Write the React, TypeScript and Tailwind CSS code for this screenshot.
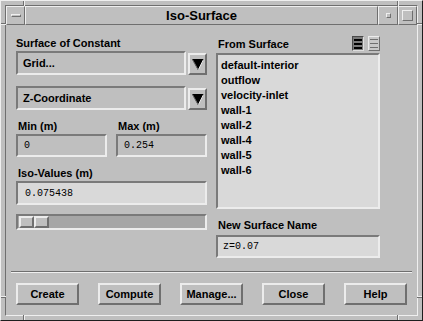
import React from "react";

const raised =
  "border-t-[2px] border-l-[2px] border-b-[2px] border-r-[2px] border-t-[#ececec] border-l-[#ececec] border-b-[#6f6f6f] border-r-[#6f6f6f]";
const sunken =
  "border-t-[2px] border-l-[2px] border-b-[2px] border-r-[2px] border-t-[#7a7a7a] border-l-[#7a7a7a] border-b-[#ececec] border-r-[#ececec]";

function DropArrow() {
  return (
    <div className={`w-[19px] h-[22px] mt-[2px] bg-[#bfbfbf] flex items-center justify-center ${raised}`}>
      <svg width="12" height="11" viewBox="0 0 12 11">
        <polygon points="0,0 12,0 6,11" fill="#000" />
        <line x1="0.5" y1="0.5" x2="6" y2="10.5" stroke="#6f6f6f" strokeWidth="1" />
        <line x1="11.5" y1="0.5" x2="6.5" y2="10.5" stroke="#e6e6e6" strokeWidth="1" />
      </svg>
    </div>
  );
}

function SelectAllIcon() {
  return (
    <div className="w-[12px] h-[15px] bg-[#7a7a7a] border border-t-[#4a4a4a] border-l-[#4a4a4a] border-b-[#dedede] border-r-[#dedede] flex flex-col justify-center gap-[2px] px-[1px]">
      <div className="h-[2px] bg-black" />
      <div className="h-[2px] bg-black" />
      <div className="h-[2px] bg-black" />
    </div>
  );
}

function DeselectIcon() {
  return (
    <div className="w-[12px] h-[15px] bg-[#c8c8c8] border border-t-[#ececec] border-l-[#ececec] border-b-[#6f6f6f] border-r-[#6f6f6f] flex flex-col justify-center gap-[3px] px-[1px]">
      <div className="h-[1px] bg-[#6f6f6f]" />
      <div className="h-[1px] bg-[#6f6f6f]" />
      <div className="h-[1px] bg-[#6f6f6f]" />
    </div>
  );
}

const items = [
  "default-interior",
  "outflow",
  "velocity-inlet",
  "wall-1",
  "wall-2",
  "wall-4",
  "wall-5",
  "wall-6",
];

export default function App() {
  const label = "text-[11px] font-bold text-black leading-[14px] font-['Liberation_Sans',Arial,sans-serif]";
  const mono = "text-[10px] text-black font-['Liberation_Mono','DejaVu_Sans_Mono',monospace]";
  return (
    <div className="w-[423px] h-[321px] relative bg-[#bfbfbf] border border-t-[#efefef] border-l-[#efefef] border-r-[#1e1e1e] border-b-[#1e1e1e] p-[4px] font-['Liberation_Sans',Arial,sans-serif]">
      {/* frame corner marks */}
      <div className="absolute left-[22px] top-0 w-[1px] h-[5px] bg-[#6f6f6f]" />
      <div className="absolute left-[23px] top-0 w-[1px] h-[5px] bg-[#efefef]" />
      <div className="absolute left-[396px] top-0 w-[1px] h-[5px] bg-[#6f6f6f]" />
      <div className="absolute left-[397px] top-0 w-[1px] h-[5px] bg-[#efefef]" />
      <div className="absolute left-[22px] bottom-0 w-[1px] h-[5px] bg-[#6f6f6f]" />
      <div className="absolute left-[23px] bottom-0 w-[1px] h-[5px] bg-[#efefef]" />
      <div className="absolute left-[396px] bottom-0 w-[1px] h-[5px] bg-[#6f6f6f]" />
      <div className="absolute left-[397px] bottom-0 w-[1px] h-[5px] bg-[#efefef]" />
      <div className="absolute left-0 top-[22px] w-[5px] h-[1px] bg-[#6f6f6f]" />
      <div className="absolute left-0 top-[23px] w-[5px] h-[1px] bg-[#efefef]" />
      <div className="absolute right-0 top-[22px] w-[5px] h-[1px] bg-[#6f6f6f]" />
      <div className="absolute right-0 top-[23px] w-[5px] h-[1px] bg-[#efefef]" />
      <div className="absolute left-0 bottom-[22px] w-[5px] h-[1px] bg-[#6f6f6f]" />
      <div className="absolute left-0 bottom-[23px] w-[5px] h-[1px] bg-[#efefef]" />
      <div className="absolute right-0 bottom-[22px] w-[5px] h-[1px] bg-[#6f6f6f]" />
      <div className="absolute right-0 bottom-[23px] w-[5px] h-[1px] bg-[#efefef]" />

      <div className="h-full flex flex-col border border-t-[#6f6f6f] border-l-[#6f6f6f] border-r-[#efefef] border-b-[#efefef]">
        {/* title bar */}
        <div className="h-[19px] flex">
          <div className={`w-[19px] h-full flex items-center justify-center border border-t-[#efefef] border-l-[#efefef] border-b-[#6f6f6f] border-r-[#6f6f6f]`}>
            <div className="w-[10px] h-[3px] bg-[#bfbfbf] border border-t-[#efefef] border-l-[#efefef] border-b-[#6f6f6f] border-r-[#6f6f6f]" />
          </div>
          <div className="flex-1 h-full flex items-center justify-center border border-t-[#efefef] border-l-[#efefef] border-b-[#6f6f6f] border-r-[#6f6f6f] text-[13px] font-bold text-black leading-none">
            Iso-Surface
          </div>
          <div className="w-[20px] h-full flex items-center justify-center border border-t-[#efefef] border-l-[#efefef] border-b-[#6f6f6f] border-r-[#6f6f6f]">
            <div className="w-[5px] h-[5px] border border-t-[#efefef] border-l-[#efefef] border-b-[#6f6f6f] border-r-[#6f6f6f]" />
          </div>
          <div className="w-[19px] h-full flex items-center justify-center border border-t-[#efefef] border-l-[#efefef] border-b-[#6f6f6f] border-r-[#6f6f6f]">
            <div className="w-[11px] h-[11px] border border-t-[#efefef] border-l-[#efefef] border-b-[#6f6f6f] border-r-[#6f6f6f]" />
          </div>
        </div>

        {/* content */}
        <div className="flex-1 flex flex-col">
          <div className="flex pl-[10px] pt-[11px]">
            {/* left column */}
            <div className="w-[191px] flex flex-col">
              <div className={label}>Surface of Constant</div>
              <div className="flex mt-[1px] gap-[2px]">
                <div className={`w-[170px] h-[24px] flex items-center pl-[5px] ${sunken} ${label}`}>Grid...</div>
                <DropArrow />
              </div>
              <div className="flex mt-[11px] gap-[2px]">
                <div className={`w-[170px] h-[24px] flex items-center pl-[5px] ${sunken} ${label}`}>Z-Coordinate</div>
                <DropArrow />
              </div>
              <div className="flex mt-[9px] gap-[9px]">
                <div className="w-[91px] flex flex-col">
                  <div className={label + " pl-[2px]"}>Min (m)</div>
                  <div className={`mt-[1px] h-[23px] flex items-center pl-[6px] ${sunken} ${mono}`}>0</div>
                </div>
                <div className="w-[91px] flex flex-col">
                  <div className={label + " pl-[2px]"}>Max (m)</div>
                  <div className={`mt-[1px] h-[23px] flex items-center pl-[6px] ${sunken} ${mono}`}>0.254</div>
                </div>
              </div>
              <div className={label + " mt-[9px] pl-[2px]"}>Iso-Values (m)</div>
              <div className={`mt-[1px] h-[24px] flex items-center pl-[7px] bg-[#d9d9d9] ${sunken} ${mono}`}>0.075438</div>
              <div className={`mt-[9px] h-[16px] bg-[#a6a6a6] flex items-stretch pl-[1px] ${sunken}`}>
                <div className={`w-[15px] bg-[#bfbfbf] ${raised}`} />
                <div className={`w-[15px] bg-[#bfbfbf] ${raised}`} />
              </div>
            </div>

            {/* right column */}
            <div className="w-[164px] ml-[9px] flex flex-col">
              <div className="flex items-center h-[15px]">
                <div className={label + " flex-1 pl-[2px]"}>From Surface</div>
                <div className="flex gap-[4px]">
                  <SelectAllIcon />
                  <DeselectIcon />
                </div>
              </div>
              <div className={`mt-[2px] h-[156px] bg-[#d9d9d9] pl-[3px] pt-[3px] ${sunken}`}>
                {items.map((it) => (
                  <div key={it} className="text-[11px] font-bold leading-[15px] text-black">
                    {it}
                  </div>
                ))}
              </div>
              <div className={label + " mt-[9px] pl-[2px]"}>New Surface Name</div>
              <div className={`mt-[3px] h-[23px] flex items-center pl-[5px] bg-[#d9d9d9] ${sunken} ${mono}`}>z=0.07</div>
            </div>
          </div>

          {/* separator */}
          <div className="mx-[5px] mt-[13px] h-[2px] border-t border-t-[#6f6f6f] border-b border-b-[#efefef]" />

          {/* buttons */}
          <div className="flex pl-[10px] gap-[19px] mt-[10px]">
            {["Create", "Compute", "Manage...", "Close", "Help"].map((b) => (
              <div
                key={b}
                className={`w-[63px] h-[22px] flex items-center justify-center bg-[#bfbfbf] text-[11px] font-bold text-black ${raised}`}
              >
                {b}
              </div>
            ))}
          </div>
        </div>
      </div>
    </div>
  );
}
